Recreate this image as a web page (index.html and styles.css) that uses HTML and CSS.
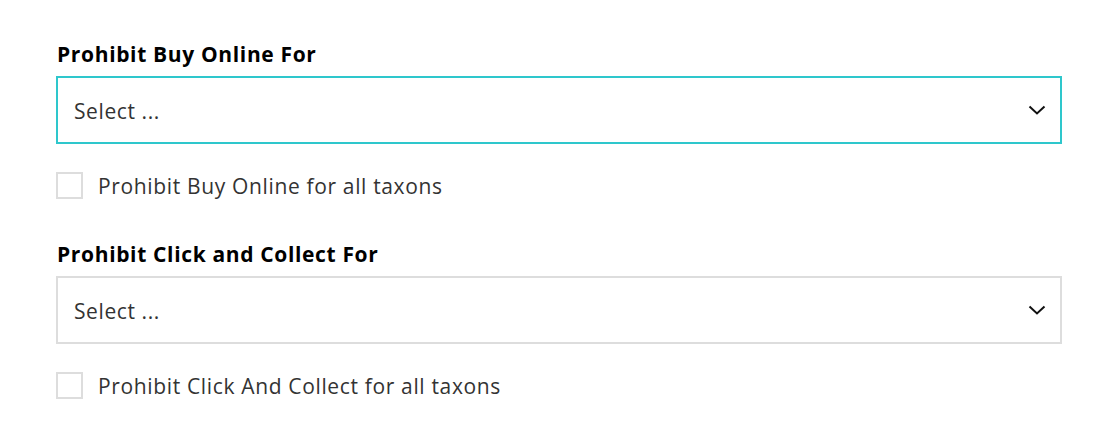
FILE: index.html
```html
<!DOCTYPE html>
<html lang="en">
<head>
    <meta charset="UTF-8">
    <title>Prohibit settings</title>
    <link rel="stylesheet" href="styles.css">
</head>
<body>
    <div class="form">
        <div class="field">
            <label class="field-label">Prohibit Buy Online For</label>
            <div class="select is-focused">
                <span class="select-value">Select ...</span>
                <svg class="select-arrow" width="18" height="10" viewBox="0 0 18 10">
                    <path d="M1.5 1.5 L9 8.5 L16.5 1.5" fill="none" stroke="#111" stroke-width="2"/>
                </svg>
            </div>
            <div class="check-row">
                <span class="checkbox"></span>
                <span class="check-label">Prohibit Buy Online for all taxons</span>
            </div>
        </div>

        <div class="field">
            <label class="field-label">Prohibit Click and Collect For</label>
            <div class="select">
                <span class="select-value">Select ...</span>
                <svg class="select-arrow" width="18" height="10" viewBox="0 0 18 10">
                    <path d="M1.5 1.5 L9 8.5 L16.5 1.5" fill="none" stroke="#111" stroke-width="2"/>
                </svg>
            </div>
            <div class="check-row">
                <span class="checkbox"></span>
                <span class="check-label">Prohibit Click And Collect for all taxons</span>
            </div>
        </div>
    </div>
</body>
</html>
```

FILE: styles.css
```css
* {
    margin: 0;
    padding: 0;
    box-sizing: border-box;
}

body {
    background: #fff;
    font-family: "Open Sans", "Noto Sans", sans-serif;
    color: #333;
}

.form {
    width: 1006px;
    margin-left: 56px;
    padding-top: 40px;
}

.field {
    margin-bottom: 40px;
}

.field-label {
    display: block;
    font-size: 21px;
    line-height: 28px;
    letter-spacing: 0.65px;
    font-weight: 700;
    color: #000;
    padding-left: 1px;
    margin-bottom: 8px;
}

.select {
    display: flex;
    align-items: center;
    justify-content: space-between;
    height: 68px;
    border: 2px solid #ddd;
    padding: 2px 14px 0 16px;
    background: #fff;
}

.select.is-focused {
    border-color: #2ec7cc;
}

.select-value {
    font-size: 21px;
    line-height: 28px;
    letter-spacing: 0.6px;
    color: #333;
}

.select-arrow {
    display: block;
    margin-top: -2px;
}

.check-row {
    display: flex;
    align-items: flex-start;
    margin-top: 28px;
}

.checkbox {
    width: 27px;
    height: 27px;
    border: 2px solid #ddd;
    background: #fff;
    flex: 0 0 auto;
}

.check-label {
    font-size: 21px;
    line-height: 24px;
    letter-spacing: 0.65px;
    margin-top: 2px;
    margin-bottom: 2px;
    margin-left: 15px;
    color: #333;
}
```
